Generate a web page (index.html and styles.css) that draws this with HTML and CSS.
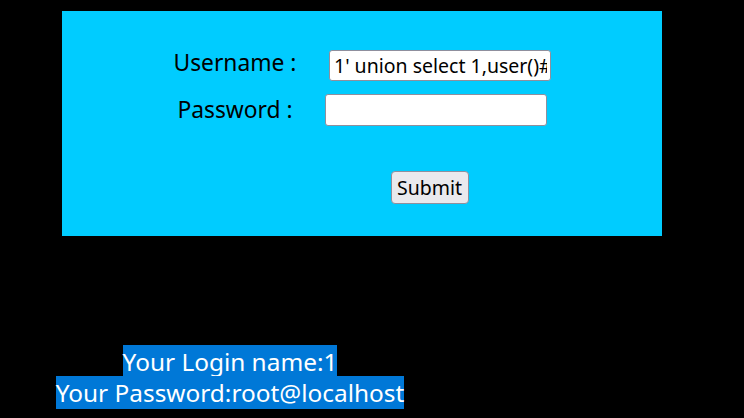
FILE: index.html
```html
<!DOCTYPE html>
<html lang="en">
<head>
  <meta charset="UTF-8" />
  <title>Less-11 Error Based - String</title>
  <link rel="stylesheet" href="styles.css">
</head>
<body>
  <div class="login-box">
    <form class="login-form" action="" method="post">
      <label class="field-label first" for="uname">Username :</label>
      <input class="field-input first" id="uname" type="text" name="uname" value="1' union select 1,user()#">
      <label class="field-label" for="passwd">Password :</label>
      <input class="field-input" id="passwd" type="text" name="passwd" value="">
      <div class="submit-row">
        <input class="submit-btn" type="submit" name="submit" value="Submit">
      </div>
    </form>
  </div>

  <div class="result">
    <span class="hl">Your Login name:1</span><br>
    <span class="hl">Your Password:root@localhost</span>
  </div>
</body>
</html>
```

FILE: styles.css
```css
* { box-sizing: border-box; }
body { margin: 0; background: #000; font-family: 'Noto Sans', 'Open Sans', sans-serif; height: 418px; overflow: hidden; }

.login-box {
  margin: 11px 0 0 62px; width: 600px; height: 225px; background-color: #00ccff;
  padding-top: 39px;
}

.login-form {
  display: grid; grid-template-columns: 150px 254px; margin-left: 98px;
  row-gap: 13px; align-items: center;
}
.field-label { text-align: center; font-size: 22.8px; line-height: 24px; color: #000; }
.field-label.first { margin-bottom: 6px; }
.field-input {
  justify-self: center; width: 222px; height: 32px; padding: 0 3px 0 4px; margin-right: 2px;
  font-family: inherit; font-size: 19.5px; color: #000; background: #fff;
  border: 1px solid #8f8f9d; border-radius: 3px;
}
.field-input.first { height: 31px; margin: 0 0 0 6px; }

.submit-row { grid-column: 2; display: flex; justify-content: center; margin-top: 32px; padding-right: 15px; }
.submit-btn {
  width: 78px; height: 33px; font-family: inherit; font-size: 19.5px; color: #000;
  background: #e9e9ed; border: 1px solid #8f8f9d; border-radius: 4px; padding: 0;
}

.result { width: 460px; margin-top: 110px; text-align: center; font-size: 24.4px; line-height: 31px; color: #fff; }
.hl { background: #0078d7; }
```
